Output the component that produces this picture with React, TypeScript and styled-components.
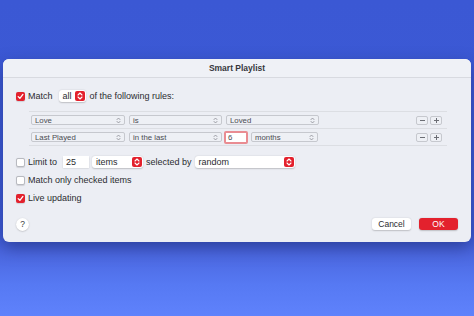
import React from "react";
import styled, { createGlobalStyle } from "styled-components";

const GlobalStyle = createGlobalStyle`
  body {
    margin: 0;
    font-family: "Liberation Sans", Arial, sans-serif;
  }
`;

const RED = "#e3212d";

const Stepper = ({ size = 10 }: { size?: number }) => (
  <StepperBox $size={size}>
    <svg width="6" height="8" viewBox="0 0 6 8">
      <path
        d="M1 3 L3 1 L5 3 M1 5 L3 7 L5 5"
        fill="none"
        stroke="#fff"
        strokeWidth="1.1"
        strokeLinecap="round"
        strokeLinejoin="round"
      />
    </svg>
  </StepperBox>
);

const Chevrons = () => (
  <svg width="5" height="7" viewBox="0 0 5 7">
    <path
      d="M1 2.6 L2.5 1 L4 2.6 M1 4.4 L2.5 6 L4 4.4"
      fill="none"
      stroke="#8a8c93"
      strokeWidth="0.8"
      strokeLinecap="round"
      strokeLinejoin="round"
    />
  </svg>
);

const Check = ({ checked }: { checked?: boolean }) => (
  <CheckBox $checked={checked}>
    {checked && (
      <svg width="7" height="7" viewBox="0 0 7 7">
        <path
          d="M1.2 3.6 L2.9 5.3 L5.9 1.4"
          fill="none"
          stroke="#fff"
          strokeWidth="1.3"
          strokeLinecap="round"
          strokeLinejoin="round"
        />
      </svg>
    )}
  </CheckBox>
);

const RulePopup = ({ label, width }: { label: string; width: number }) => (
  <RuleSelect $width={width}>
    <span>{label}</span>
    <Chevrons />
  </RuleSelect>
);

const rules = [
  { field: "Love", op: "is", value: "Loved" },
  { field: "Last Played", op: "in the last", amount: "6", value: "months" },
];

const App = () => {
  return (
    <>
      <GlobalStyle />
      <Page>
        <Dialog>
          <TitleBar>Smart Playlist</TitleBar>
          <Body>
            <Row>
              <Check checked />
              <Label>Match</Label>
              <Popup $width={27} $ml={6}>
                <span>all</span>
                <Stepper />
              </Popup>
              <Label $ml={4}>of the following rules:</Label>
            </Row>

            <Rules>
              {rules.map((r) => (
                <RuleRow key={r.field}>
                  <RulePopup label={r.field} width={94} />
                  <RulePopup label={r.op} width={93} />
                  {r.amount ? (
                    <>
                      <AmountField>{r.amount}</AmountField>
                      <RulePopup label={r.value} width={67} />
                    </>
                  ) : (
                    <RulePopup label={r.value} width={93} />
                  )}
                  <Spacer />
                  <SmallButton>
                    <svg width="7" height="7" viewBox="0 0 7 7">
                      <path d="M1 3.5 H6" stroke="#6c6e75" strokeWidth="1" />
                    </svg>
                  </SmallButton>
                  <SmallButton>
                    <svg width="7" height="7" viewBox="0 0 7 7">
                      <path d="M1 3.5 H6 M3.5 1 V6" stroke="#6c6e75" strokeWidth="1" />
                    </svg>
                  </SmallButton>
                </RuleRow>
              ))}
            </Rules>

            <Row $mt={10}>
              <Check />
              <Label>Limit to</Label>
              <TextField $ml={6}>25</TextField>
              <Popup $width={51} $ml={3}>
                <span>items</span>
                <Stepper />
              </Popup>
              <Label $ml={3}>selected by</Label>
              <Popup $width={100} $ml={3}>
                <span>random</span>
                <Stepper />
              </Popup>
            </Row>
            <Row $mt={6}>
              <Check />
              <Label>Match only checked items</Label>
            </Row>
            <Row $mt={6}>
              <Check checked />
              <Label>Live updating</Label>
            </Row>

            <Footer>
              <HelpButton>?</HelpButton>
              <Spacer />
              <Button>Cancel</Button>
              <Button $primary>OK</Button>
            </Footer>
          </Body>
        </Dialog>
      </Page>
    </>
  );
};

export default App;

const Page = styled.div`
  width: 474px;
  height: 316px;
  box-sizing: border-box;
  padding: 59px 3px 0;
  overflow: hidden;
  background: linear-gradient(
    to bottom,
    #3b58d4 0%,
    #3d5bd7 74%,
    #4b67e0 80%,
    #5679f3 90%,
    #5f82fc 100%
  );
`;

const Dialog = styled.div`
  height: 183px;
  background: #eceef4;
  border-radius: 6px;
  box-shadow: 0 6px 16px rgba(25, 35, 100, 0.5);
  display: flex;
  flex-direction: column;
  overflow: hidden;
`;

const TitleBar = styled.div`
  height: 18px;
  flex-shrink: 0;
  background: #eff1f6;
  border-bottom: 1px solid #d8dae0;
  display: flex;
  align-items: center;
  justify-content: center;
  font-weight: bold;
  font-size: 8.5px;
  color: #36373c;
`;

const Body = styled.div`
  flex: 1;
  display: flex;
  flex-direction: column;
  padding: 12px 13px 12px 13px;
`;

const Row = styled.div<{ $mt?: number }>`
  display: flex;
  align-items: center;
  height: 12px;
  margin-top: ${(p) => p.$mt ?? 0}px;
`;

const Label = styled.span<{ $ml?: number }>`
  font-size: 9px;
  color: #2b2c30;
  margin-left: ${(p) => p.$ml ?? 3}px;
  white-space: nowrap;
`;

const CheckBox = styled.div<{ $checked?: boolean }>`
  width: 9px;
  height: 9px;
  box-sizing: border-box;
  border-radius: 2px;
  display: flex;
  align-items: center;
  justify-content: center;
  background: ${(p) => (p.$checked ? RED : "#fff")};
  border: ${(p) => (p.$checked ? "none" : "0.5px solid #b8bac0")};
  box-shadow: 0 0.5px 1px rgba(0, 0, 0, 0.12);
`;

const StepperBox = styled.div<{ $size: number }>`
  width: ${(p) => p.$size}px;
  height: ${(p) => p.$size}px;
  border-radius: 2px;
  background: ${RED};
  display: flex;
  align-items: center;
  justify-content: center;
  flex-shrink: 0;
`;

const Popup = styled.div<{ $width: number; $ml?: number }>`
  width: ${(p) => p.$width}px;
  height: 12px;
  box-sizing: border-box;
  margin-left: ${(p) => p.$ml ?? 0}px;
  background: #fff;
  border-radius: 3px;
  box-shadow: 0 0.5px 1.5px rgba(0, 0, 0, 0.2);
  display: flex;
  align-items: center;
  justify-content: space-between;
  padding: 0 1px 0 4px;
  font-size: 9px;
  color: #2b2c30;
`;

const TextField = styled.div<{ $ml?: number }>`
  width: 26px;
  height: 12px;
  box-sizing: border-box;
  margin-left: ${(p) => p.$ml ?? 0}px;
  background: #fff;
  box-shadow: 0 0.5px 1.5px rgba(0, 0, 0, 0.18);
  display: flex;
  align-items: center;
  padding-left: 3px;
  font-size: 9px;
  color: #2b2c30;
`;

const Rules = styled.div`
  margin: 9px 11px 0 13px;
  border-bottom: 1px solid #dcdee3;
`;

const RuleRow = styled.div`
  height: 16px;
  border-top: 1px solid #dcdee3;
  display: flex;
  align-items: center;
  gap: 4px;
  padding-left: 2px;
`;

const RuleSelect = styled.div<{ $width: number }>`
  width: ${(p) => p.$width}px;
  height: 10px;
  box-sizing: border-box;
  border: 1px solid #c6c8ce;
  border-radius: 2px;
  background: #eef0f5;
  display: flex;
  align-items: center;
  justify-content: space-between;
  padding: 0 3px 0 3px;
  font-size: 7.8px;
  color: #4a4b51;
  white-space: nowrap;
`;

const AmountField = styled.div`
  width: 24px;
  height: 13px;
  box-sizing: border-box;
  margin: 0 -1px 0 -2px;
  border: 2px solid #e98c92;
  border-radius: 2px;
  background: #fff;
  display: flex;
  align-items: center;
  padding-left: 2px;
  font-size: 7.8px;
  color: #4a4b51;
`;

const Spacer = styled.div`
  flex: 1;
`;

const SmallButton = styled.div`
  width: 12px;
  height: 9px;
  box-sizing: border-box;
  border: 1px solid #c6c8ce;
  border-radius: 2px;
  background: #eef0f5;
  display: flex;
  align-items: center;
  justify-content: center;
  margin-left: -2px;
  &:last-child {
    margin-right: 5px;
  }
`;

const Footer = styled.div`
  margin-top: auto;
  display: flex;
  align-items: center;
  height: 12px;
`;

const HelpButton = styled.div`
  width: 13px;
  height: 13px;
  border-radius: 50%;
  background: #fff;
  box-shadow: 0 0.5px 1.5px rgba(0, 0, 0, 0.25);
  display: flex;
  align-items: center;
  justify-content: center;
  font-size: 8.5px;
  color: #3a3b40;
`;

const Button = styled.div<{ $primary?: boolean }>`
  width: 39px;
  height: 12px;
  margin-left: 8px;
  border-radius: 3px;
  display: flex;
  align-items: center;
  justify-content: center;
  font-size: 8.5px;
  background: ${(p) => (p.$primary ? RED : "#fff")};
  color: ${(p) => (p.$primary ? "#fff" : "#2b2c30")};
  box-shadow: 0 0.5px 1.5px rgba(0, 0, 0, 0.2);
`;
